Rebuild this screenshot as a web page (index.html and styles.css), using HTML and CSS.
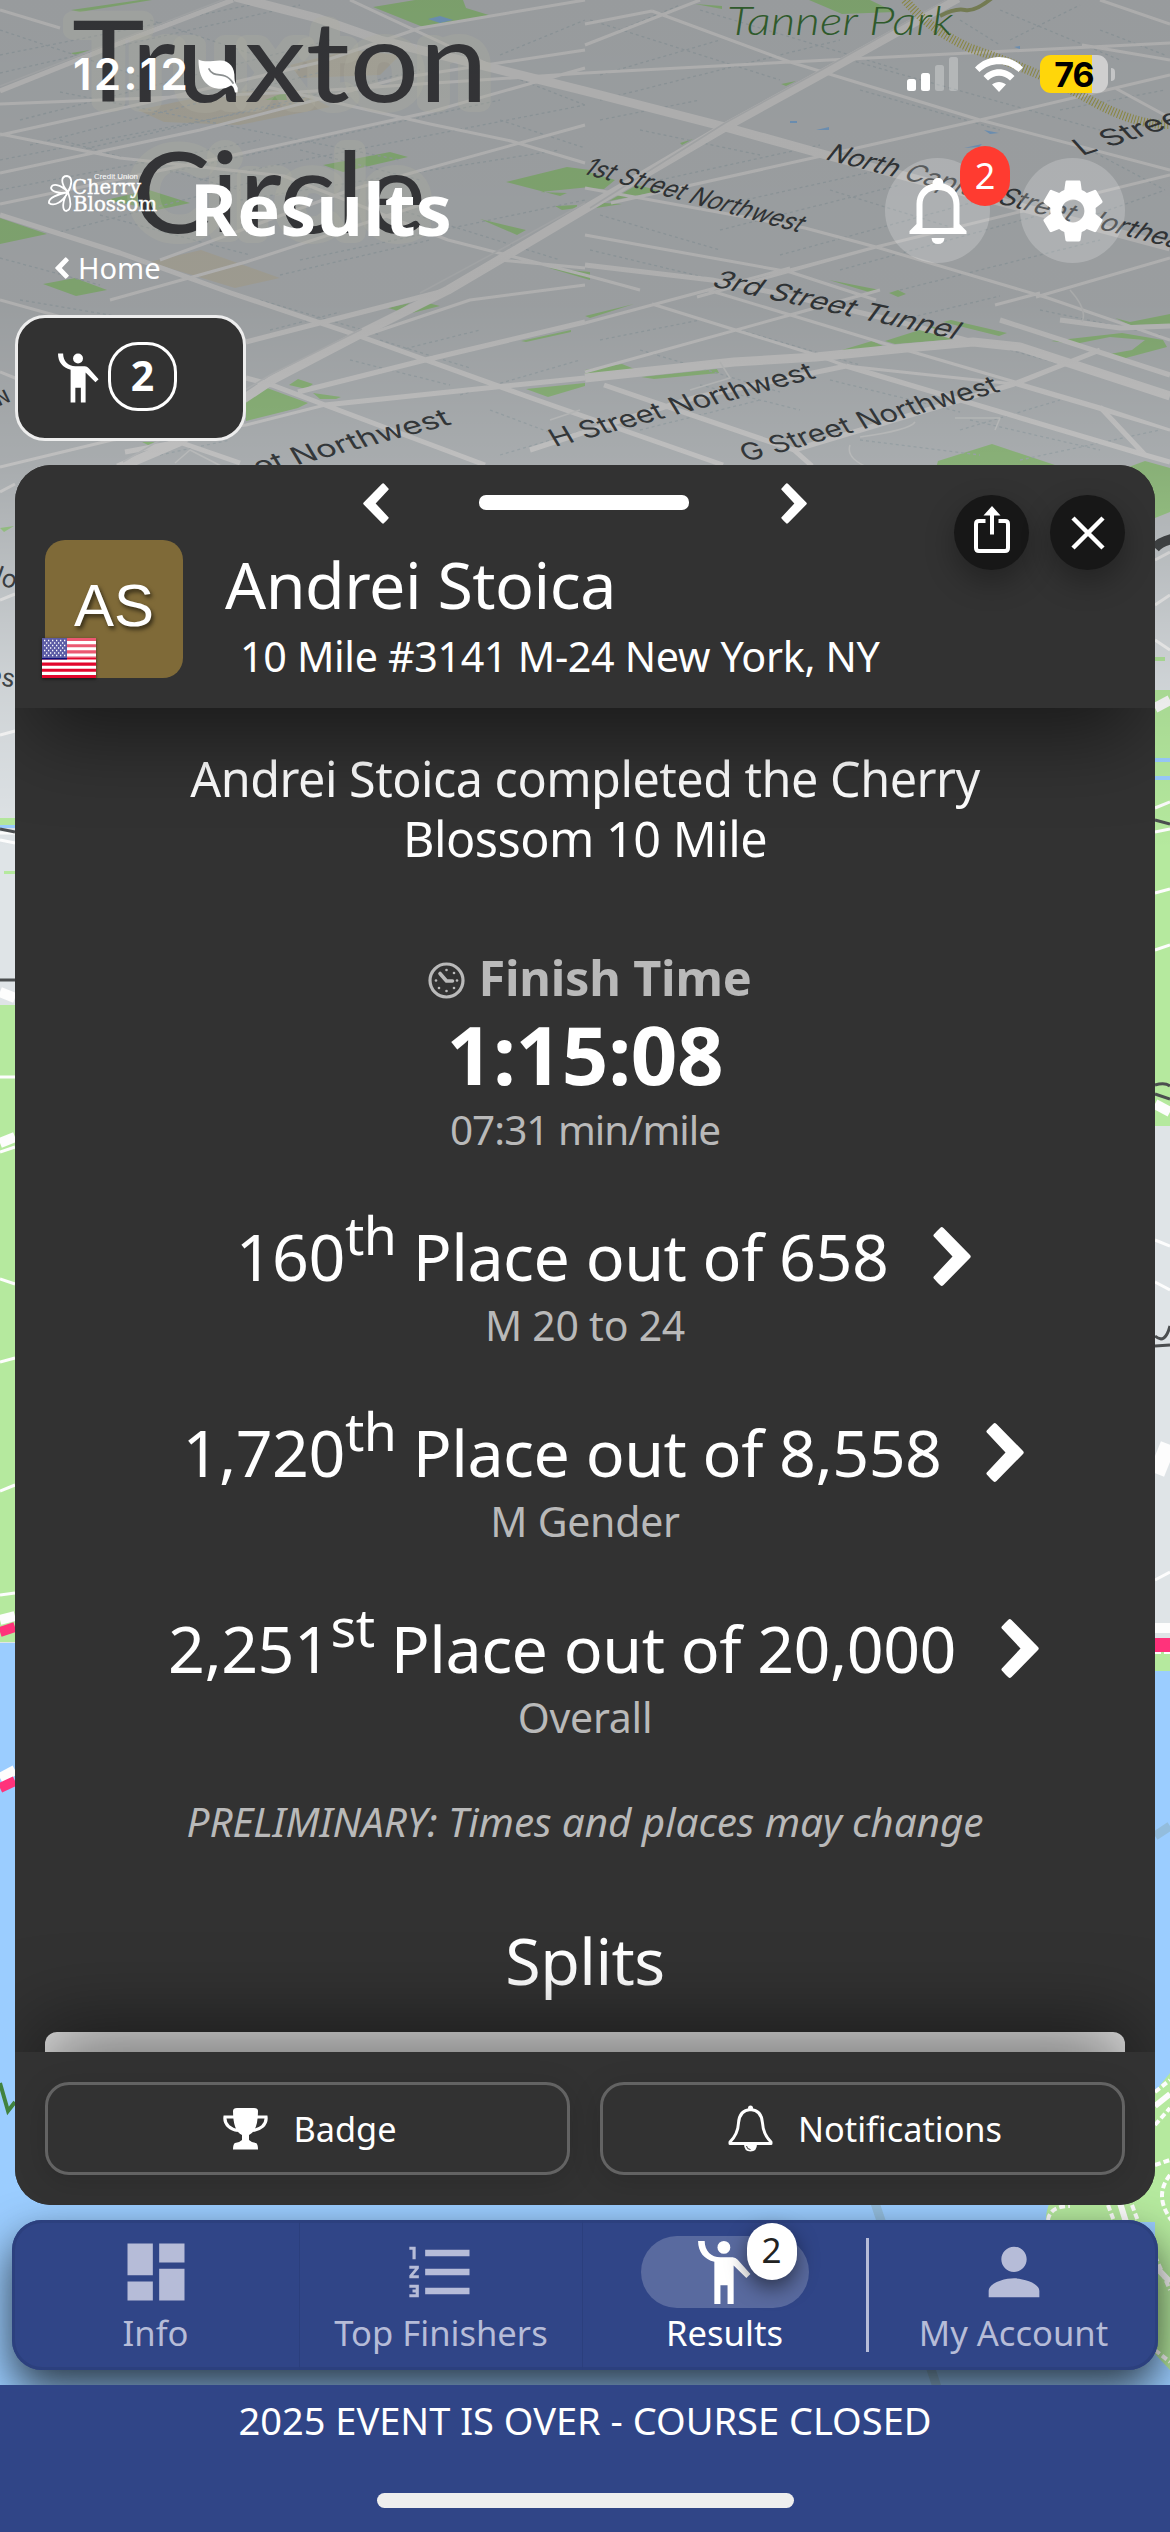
FILE: index.html
```html
<!DOCTYPE html>
<html lang="en">
<head>
<meta charset="utf-8">
<title>Results</title>
<link rel="stylesheet" href="styles.css">
</head>
<body>
<svg class="defs" width="0" height="0" aria-hidden="true">
  <symbol id="person" viewBox="0 0 52 62"><circle cx="25.4" cy="6.3" r="6.3"/><path d="M0 0H6.5C6.5 10 13 16 22 16H34Q37 16 39 18.5L51.5 32.5L47.5 36.5L35 24V62H29V43.5H22V62H16V20.5C6 18 0 11 0 0Z"/></symbol>
  <symbol id="chev" viewBox="0 0 38 59"><path d="M8.5 0Q9.500 0 10.500 1L37 28Q38.500 29.500 37 31L10.500 58Q9.500 59 8.500 59Q7.500 59 0.800 51.500Q0 50.500 0.800 49.500L19.500 29.500L0.800 9.500Q0 8.500 0.800 7.500Q7.500 0 8.500 0Z"/></symbol>
</svg>

<svg class="map" viewBox="0 0 1170 2532" aria-hidden="true">
  <defs>
    <linearGradient id="shade" x1="0" y1="0" x2="0" y2="850" gradientUnits="userSpaceOnUse">
      <stop offset="0" stop-color="#000" stop-opacity=".32"/><stop offset=".36" stop-color="#000" stop-opacity=".31"/>
      <stop offset=".55" stop-color="#000" stop-opacity=".245"/><stop offset=".8" stop-color="#000" stop-opacity=".08"/><stop offset="1" stop-color="#000" stop-opacity="0"/>
    </linearGradient>
  </defs>
  <rect width="1170" height="2532" fill="#dfe4e7"/>
  <g fill="#e3dfd0">
    <path d="M138 110L224 92L298 90L330 107L239 125L164 122ZM149 262L201 250L280 278L235 288ZM290 65L350 50L400 55L380 75L300 78Z"/>
  </g>
  <g fill="#b5e99e">
    <path d="M71 10L140 0H152L80 12ZM373 7L415 0H463L466 8L492 16L423 27ZM149 190L190 203L157 210L106 200ZM323 165L390 152L408 157L343 172ZM0 218L47 234L0 244ZM43 284L75 278L107 290L76 296ZM506 182L567 167L590 170V187L540 192L567 193L560 196ZM480 219L526 230L517 235ZM555 206L577 205V208L562 210ZM71 53L90 50L75 55ZM265 100L285 92L287 100Z"/>
    <path d="M549 268L590 272V280ZM695 4L722 6V9ZM809 0H870L895 12L842 14ZM585 171L615 180L604 189L585 188ZM609 201L637 185L661 191ZM596 208L604 203L622 204ZM781 84L796 81L786 86ZM680 143L693 139L682 145ZM829 280L880 290L872 293ZM889 293L898 290L906 294L898 297Z"/>
    <path d="M246 395L267 388L308 403L298 408L246 421ZM289 385L298 379L313 384L306 389ZM313 393L341 397L336 399H320ZM388 308L410 303L398 311ZM412 313L428 303L440 306ZM521 341L571 330V332L526 342ZM526 389L585 383V386L548 397ZM142 442H155L148 445Z"/>
    <path d="M585 370L622 364L637 370L585 375ZM585 316L634 304L590 318ZM641 377L717 369L719 373L654 379ZM842 350L872 341L883 346L854 350ZM885 341L932 326L958 339L895 344ZM943 322L951 320L1007 333L999 336ZM1051 341L1122 333L1163 340L1167 347L1122 359L1104 355L1132 350L1145 340L1110 337L1075 344ZM1115 318L1130 322L1170 314V324L1130 325ZM936 468L938 461L992 444L1055 465V468ZM1126 468L1145 461L1170 468V512L1150 520Z"/>
    <path d="M0 528L14 526L4 532ZM0 818H15V825H0ZM4 871H15V874H4ZM0 1005H15V1642H0ZM1155 657H1165V661H1155ZM1155 690H1170V1126H1155ZM1155 1652H1170V1671H1155Z"/>
  </g>
  <g fill="#9bcdff">
    <path d="M0 1643H15V2390H0ZM14 2160H1060V2225H14ZM0 2225H1170V2390H0ZM1155 1671H1170V2230H1140ZM0 825H15V828H0ZM1155 758H1170V762H1155ZM1155 776H1170V780H1155ZM428 19L440 16L453 20L440 23ZM816 130L829 127V130ZM984 130L999 133L990 134ZM964 148L982 144L979 147ZM790 121H797V123H790ZM1014 47L1020 46V49Z"/>
  </g>
  <path fill="#b5e99e" d="M1046 2222Q1045 2203 1060 2190L1140 2110L1170 2073V2370L1155 2354V2222Z"/>
  <g fill="none" stroke="#c9d5da" stroke-width="1.300" stroke-dasharray="3 3">
    <path d="M0 30L150 80M0 55L260 3M0 73L300 5M20 120L330 40M30 145L330 70M80 150L420 70M0 160L360 90M170 172L500 100M200 180L585 105M0 190L260 140M240 200L560 150M300 260L585 200M280 275L430 240M0 258L100 285M60 232L260 180M470 60L585 105M500 55L585 20M150 20L300 70M60 92L400 160M60 140L240 190M400 210L560 260M100 215L250 255M300 150L420 180M500 120L585 148"/>
    <path d="M590 20L780 80M600 75L720 40M600 100L840 40M700 10L900 70M850 60L1100 130M860 90L1000 130M600 120L700 100M640 130L760 155M660 180L820 145M700 210L880 170M720 230L900 185M780 255L1000 195M840 270L1040 215M900 290L1100 240M600 215L720 250M590 250L800 300M830 190L960 230M1000 10L1120 60M1010 40L1080 5M1100 30L1165 55M1060 110L1165 90M1080 220L1165 190M1090 150L1165 190M960 20L1000 45M620 30L680 5"/>
    <path d="M260 300L380 335M270 330L340 312M380 340L470 368M400 350L480 330M350 360L450 385M460 395L580 360M490 410L570 440M500 455L585 430M20 300L140 320M600 340L700 320M640 350L780 392M740 330L860 365M700 385L800 410M830 380L960 412M960 430L1060 400M970 420L1100 450M1020 460L1160 430M1010 350L1100 375M900 320L1000 296M640 430L760 400M860 440L980 455M1040 310L1160 335M160 455L230 440"/>
  </g>
  <g fill="none" stroke="#fdfdfd" stroke-linejoin="round">
    <path stroke-width="9" d="M235 -3L317 18L380 40L585 91L725 127L826 155L1170 247M118 468L179 442L272 380L362 333L448 290L504 257L585 209L725 127L816 77L958 -2M585 378L660 370L734 362L816 357L906 348L973 342L1020 347L1170 396"/>
    <path stroke-width="5" d="M0 91L115 45L233 0M0 215L120 253L231 293L362 337L537 400L723 465M246 342L448 290M246 378L272 385L325 405L485 465M325 405L496 387L585 378M298 392L425 360L585 322M585 265L712 280L790 296L900 322L973 342M1000 320L1170 375M1060 320L1120 328L1170 326M1100 407L1145 455L1170 462M846 366L1145 455M530 450L622 420L697 397L846 366M794 450L1014 384L1100 350M604 385L794 450L812 466M125 452L179 442L240 463"/>
    <path stroke-width="3" d="M0 10L60 28M350 0L511 75L585 91M0 104L300 92L585 73L790 62L1170 43M0 135L145 103L321 62L420 28L585 0M0 134L120 158L284 176L448 240L585 275L640 290M0 173L200 130L400 78L585 50M0 204L220 158L430 112L585 68M267 87L430 124L511 141L585 163M160 260L350 190L585 125M652 11L790 62L980 120L1170 170M652 11L585 24M611 203L826 155L980 120L1115 88L1170 75M697 297L876 247L1170 175M790 270L876 247M585 188L805 228L876 247L1048 298L1170 340M585 235L790 272L876 300M1036 297L1170 258M585 323L652 305L708 290L790 268M652 304L816 355L846 366L1014 384L1170 430M708 290L906 350L1100 407L1170 430M585 372L790 315L880 290M995 305L1040 293M0 467L112 440L246 425L325 405M0 300L90 325M0 372L20 380M700 0L585 45M1100 0L1170 24M1082 45L1170 60M1115 88L1170 118M500 260L585 268M110 300L246 262L420 205M360 337L470 300L585 285"/>
    <path stroke="#e9ecee" stroke-width="1.500" d="M420 293L496 252L585 203M123 462L272 374L362 329M590 208L725 123L816 73L950 -2M0 86L233 -4"/>
    <path stroke-width="1.500" stroke="#f4f6f6" d="M850 445Q845 460 875 470M860 437Q910 430 915 422M955 418H1000L995 430M550 420L580 410M1070 290Q1088 310 1082 322M720 362L730 378L690 390M175 463L190 450L225 468"/>
  </g>
  <g fill="none" stroke="#c8c35b" stroke-width="1.200" stroke-dasharray="1 2"><path stroke-width="9" d="M905 0Q930 30 970 48Q1040 72 1090 100T1175 124"/></g>
  <path fill="none" stroke="#a9b478" stroke-width="4" d="M940 16Q955 8 965 10T992 -2"/>
  <g class="road-label" fill="#44494c">
    <text transform="translate(581 173) rotate(15.300) skewX(-24)" textLength="225" lengthAdjust="spacingAndGlyphs">1st Street Northwest</text>
    <text transform="translate(824 159) rotate(14.300) skewX(-24)" textLength="388" lengthAdjust="spacingAndGlyphs">North Capitol Street Northeast</text>
    <text transform="translate(1082 156) rotate(-18) skewX(24)" textLength="120" lengthAdjust="spacingAndGlyphs">L Street</text>
    <text transform="translate(710 286) rotate(12.300) skewX(-24)" textLength="250" lengthAdjust="spacingAndGlyphs">3rd Street Tunnel</text>
    <text transform="translate(555 447) rotate(-14.800) skewX(16)" textLength="271" lengthAdjust="spacingAndGlyphs">H Street Northwest</text>
    <text transform="translate(746 462) rotate(-15.500) skewX(16)" textLength="265" lengthAdjust="spacingAndGlyphs">G Street Northwest</text>
    <text transform="translate(180 496) rotate(-14.800) skewX(16)" textLength="282" lengthAdjust="spacingAndGlyphs">I Street Northwest</text>
    <text transform="translate(-18 413) rotate(-22) skewX(20)">nw</text>
    <text transform="translate(-18 578) rotate(20)">No</text>
    <text transform="translate(-14 682) rotate(12)">es</text>
  </g>
  <g class="place" fill="#4a4b4f">
    <text x="72" y="102" textLength="416" lengthAdjust="spacingAndGlyphs">Truxton</text>
    <text x="132" y="233" textLength="294" lengthAdjust="spacingAndGlyphs">Circle</text>
  </g>
  <text class="park" x="727" y="35" textLength="226" lengthAdjust="spacingAndGlyphs">Tanner Park</text>
  <g fill="none" stroke="#fdfdfd">
    <path stroke-width="3" d="M0 492L15 484M0 600L15 594M0 735L15 731M0 833H15M0 840L15 843M0 1077H15M0 1152L15 1147M0 1279L15 1284M0 1362L15 1358M0 1491L15 1485M0 1595L15 1593M1155 560L1170 552M1155 605L1170 595M1155 640L1170 650M1155 808L1170 802M1155 832L1170 829M1155 893L1170 889M1155 950L1170 945M1155 1240L1170 1246M1155 1282L1170 1290M1155 1580L1170 1572"/>
    <path stroke-width="10" d="M0 992L15 998M0 1143L15 1137M1155 708L1170 700M1155 1104L1170 1112M1155 1628H1170M0 1620L15 1616M0 1778L15 1770"/>
    <path stroke-width="32" d="M1155 1456L1170 1462"/>
    <path stroke-width="4" stroke-dasharray="6 3" d="M1155 2092L1170 2080M1155 2125L1170 2108M1155 2165L1170 2160M1170 2175Q1150 2200 1180 2230M1108 2205L1114 2221M1132 2205L1138 2221M1048 2220Q1050 2206 1070 2206M1155 2256L1170 2290M1155 2350L1170 2362M1155 1652H1170"/>
    <path stroke-width="6" d="M1120 2203L1126 2222M1155 2106L1170 2094M1155 2266L1170 2282"/>
  </g>
  <g fill="none" stroke="#4b4e50" stroke-width="3"><path d="M0 829L15 832M0 980H15M1155 820L1170 824M1155 1085Q1165 1082 1170 1086M1155 1094L1170 1099M1155 1336Q1165 1345 1170 1326M1155 1346L1170 1345"/><path stroke-width="10" d="M1155 548Q1160 542 1172 539"/></g>
  <g fill="none" stroke="#ff337b" stroke-width="10"><path d="M0 1632L15 1627M0 1788L15 1781"/><path stroke-width="14" d="M1155 1645H1170"/></g>
  <path fill="none" stroke="#41823f" stroke-width="4" d="M0 2083L8 2111L15 2102"/>
  <path fill="none" stroke="#93bddd" stroke-width="9" d="M872 2194L938 2390M1155 1836L1170 1826"/>
  <rect width="1170" height="860" fill="url(#shade)"/>
</svg>

<div class="app">
  <div class="status">
    <div class="status-left"><span class="clock">12:12</span>
      <svg width="40" height="34" viewBox="0 0 40 34"><path fill="#fff" d="M.5.5C8 4 14 1.500 22 1.500C32 1.500 37 9 36.500 19C36.500 23 38 25 39.800 29L39.500 33.500L37 33.500C36 29 35 27 33 26.500C29 29 24 30.500 19 29.500C5 27 .5 15 .5.500Z"/><path fill="none" stroke="#8b8f90" stroke-width="1.800" stroke-linecap="round" d="M11 10C14 17 22 15 27 17Q32 19 35 24"/></svg>
    </div>
    <div class="status-right">
      <svg width="51" height="34" viewBox="0 0 51 34" fill="#fff"><rect y="22" width="9" height="12" rx="2.500"/><rect x="14" y="16" width="9" height="18" rx="2.500"/><g opacity=".27"><rect x="28" y="8" width="9" height="26" rx="2.500"/><rect x="42" y="0" width="9" height="34" rx="2.500"/></g></svg>
      <svg class="wifi" width="48" height="35" viewBox="0 0 48 35" fill="#fff"><path d="M0 10.500C13-3.500 35-3.500 48 10.500L43.500 15C33 4.500 15 4.500 4.500 15ZM8.500 19C17 10 31 10 39.500 19L35 23.500C29 17 19 17 13 23.500ZM17 27.500C21 24 27 24 31 27.500L24 35Z"/></svg>
      <div class="battery"><span>76</span></div><i class="nub"></i>
    </div>
  </div>

  <header class="top">
    <div class="top-row">
      <svg class="logo" width="110" height="42" viewBox="0 0 110 42" fill="#fff">
        <g fill="none" stroke="#fff" stroke-width="1.800"><path d="M20 21C12 12 13 5 19 5C25 6 24 14 20 21C12 13 4 12 3 17C4 21 12 23 20 21C10 23 0 27 1 32C6 36 15 31 20 21C14 30 14 39 18 40C24 39 23 30 20 21"/></g>
        <text class="logo-small" x="46" y="7.500" textLength="44" lengthAdjust="spacingAndGlyphs">Credit Union</text>
        <text class="logo-big" x="24" y="22.500" textLength="69" lengthAdjust="spacingAndGlyphs">Cherry</text>
        <text class="logo-big" x="25" y="39.500" textLength="84" lengthAdjust="spacingAndGlyphs">Blossom</text>
      </svg>
      <h1>Results</h1>
      <div class="round"><svg width="58" height="66" viewBox="0 0 58 66"><path fill="#fff" fill-rule="evenodd" d="M29 0C32 0 34.500 2 34.500 5.500C44 8 50.500 15.500 50.500 26V46L57.500 53V56H.5V53L7.500 46V26C7.500 15.500 14 8 23.500 5.500C23.500 2 26 0 29 0ZM29 12C19 12 13.500 18 13.500 27V50H44.500V27C44.500 18 39 12 29 12Z"/><path fill="#fff" d="M22.500 60H35.500Q35 66 29 66T22.500 60Z"/></svg><b class="alert">2</b></div>
      <div class="round"><svg width="76" height="76" viewBox="0 0 24 24"><path fill="#fff" d="M19.140 12.940c.04-.3.060-.61.060-.94 0-.32-.02-.64-.07-.94l2.030-1.580c.18-.14.230-.41.120-.61l-1.920-3.320c-.12-.22-.37-.29-.59-.22l-2.390.96c-.5-.38-1.030-.7-1.620-.94L14.400 2.810c-.04-.24-.24-.41-.48-.41h-3.840c-.24 0-.43.170-.47.410L9.250 5.350C8.660 5.590 8.120 5.920 7.630 6.290L5.240 5.330c-.22-.08-.47 0-.59.220L2.740 8.870C2.620 9.080 2.660 9.340 2.860 9.480l2.030 1.580C4.840 11.360 4.800 11.690 4.800 12s.02.640.07.940l-2.030 1.580c-.18.140-.23.410-.12.610l1.920 3.320c.12.220.37.290.59.220l2.390-.96c.5.380 1.030.7 1.620.94l.36 2.540c.05.240.24.410.48.410h3.840c.24 0 .44-.17.470-.41l.36-2.540c.59-.24 1.130-.56 1.620-.94l2.390.96c.22.080.47 0 .59-.22l1.920-3.320c.12-.22.070-.47-.12-.61L19.140 12.940zM12 15.600c-1.980 0-3.600-1.620-3.600-3.600s1.620-3.600 3.600-3.600 3.600 1.620 3.600 3.600-1.620 3.600-3.600 3.600z"/></svg></div>
    </div>
    <div class="home"><svg width="14" height="22"><use href="#chev" transform="rotate(180 7 11)"/></svg>Home</div>
  </header>

  <div class="chip"><svg width="41" height="50"><use href="#person"/></svg><b>2</b></div>

  <main class="panel">
    <div class="panel-head">
      <div class="handle">
        <div class="pager"><svg width="26" height="41"><use href="#chev" transform="rotate(180 13 20.500)"/></svg><i></i><svg width="26" height="41"><use href="#chev"/></svg></div>
        <div class="actions">
          <span><svg width="36" height="48" viewBox="0 0 36 48"><path fill="none" stroke="#fff" stroke-width="4" d="M11.500 15H5Q2 15 2 18V42Q2 45 5 45H31Q34 45 34 42V18Q34 15 31 15H24.500"/><path fill="#fff" d="M18 0L26.500 9.500H20V28.500H16V9.500H9.500Z"/></svg></span>
          <span><svg width="34" height="34" viewBox="0 0 34 34"><path fill="none" stroke="#fff" stroke-width="4.500" d="M2 2L32 32M32 2L2 32"/></svg></span>
        </div>
      </div>
      <div class="who">
        <div class="avatar">AS
          <svg class="flag" width="54" height="40" viewBox="0 0 54 40"><rect width="54" height="40" fill="#fff"/><path stroke="#e2062c" stroke-width="3.080" d="M0 1.540H54M0 7.700H54M0 13.860H54M0 20H54M0 26.160H54M0 32.310H54M0 38.460H54"/><rect width="25" height="21.500" fill="#0b0b78"/><path stroke="#fff" stroke-width="1.300" stroke-dasharray="1.300 2.700" d="M2 2.500H24M4 5H23M2 7.500H24M4 10H23M2 12.500H24M4 15H23M2 17.500H24"/><rect width="54" height="20" fill="#fff" opacity=".33"/></svg>
        </div>
        <div><div class="name">Andrei Stoica</div><div class="meta">10 Mile #3141 M-24 New York, NY</div></div>
      </div>
    </div>

    <div class="content">
      <p class="done">Andrei Stoica completed the Cherry<br>Blossom 10 Mile</p>
      <div class="finish"><svg width="37" height="37" viewBox="0 0 37 37"><g fill="none" stroke="#b9b9b9"><circle cx="18.500" cy="18.500" r="16.500" stroke-width="3.200"/><path stroke-width="3.600" stroke-linecap="round" stroke-linejoin="round" d="M12 11.500L18.500 19H24.500"/></g><g fill="#b9b9b9"><circle cx="18.500" cy="8" r="1.300"/><circle cx="18.500" cy="29" r="1.300"/><circle cx="8" cy="18.500" r="1.300"/><circle cx="29" cy="18.500" r="1.300"/><circle cx="11" cy="26" r="1.300"/><circle cx="26" cy="26" r="1.300"/><circle cx="26" cy="11" r="1.300"/></g></svg>Finish Time</div>
      <div class="time">1:15:08</div>
      <div class="pace">07:31 min/mile</div>
      <div class="place-row">160<sup>th</sup> Place out of 658<svg width="38" height="59"><use href="#chev"/></svg></div>
      <div class="sub">M 20 to 24</div>
      <div class="place-row next">1,720<sup>th</sup> Place out of 8,558<svg width="38" height="59"><use href="#chev"/></svg></div>
      <div class="sub">M Gender</div>
      <div class="place-row next">2,251<sup>st</sup> Place out of 20,000<svg width="38" height="59"><use href="#chev"/></svg></div>
      <div class="sub">Overall</div>
      <div class="prelim">PRELIMINARY: Times and places may change</div>
      <h2>Splits</h2>
      <div class="splits"></div>
    </div>

    <div class="panel-foot">
      <div class="btn"><svg width="45" height="42" viewBox="0 0 45 42"><path fill="#fff" d="M10 3Q10 0 14 0H31Q35 0 35 3Q35 23 26 27V32Q29 35 33 35Q35 36 35 41.500H10Q10 36 12 35Q16 35 19 32V27Q10 23 10 3Z"/><path fill="none" stroke="#fff" stroke-width="3.200" d="M12 9H2C1 17 8 21.500 15 22.500M33 9H43C44 17 37 21.500 30 22.500"/></svg>Badge</div>
      <div class="btn"><svg width="45" height="47" viewBox="0 0 45 47"><path fill="none" stroke="#fff" stroke-width="3" stroke-linejoin="round" d="M22.500 4.500C14 5 11 11 10.500 18C10 28 6 33 2 37V38.500H43V37C39 33 35 28 34.500 18C34 11 31 5 22.500 4.500Z"/><circle cx="22.500" cy="3" r="2.500" fill="#fff"/><path fill="#fff" d="M16 39H29Q29 46.500 22.500 46.500T16 39Z"/><path fill="none" stroke="#333" stroke-width="1" d="M18.500 41Q19 44.500 22.500 44.500"/></svg>Notifications</div>
    </div>
  </main>

  <nav class="tabs">
    <div class="tab w1"><div class="ico"><svg width="76" height="76" viewBox="0 0 24 24"><path d="M3 13h8V3H3v10zm0 8h8v-6H3v6zm10 0h8V11h-8v10zm0-18v6h8V3h-8z"/></svg></div>Info</div>
    <div class="tab w2"><div class="ico"><svg width="76" height="76" viewBox="0 0 24 24"><path d="M2 17h2v.5H3v1h1v.5H2v1h3v-4H2v1zm1-9h1V4H2v1h1v3zm-1 3h1.800L2 13.100v.9h3v-1H3.200L5 10.900V10H2v1zm5-6v2h14V5H7zm0 14h14v-2H7v2zm0-6h14v-2H7v2z"/></svg></div>Top Finishers</div>
    <div class="tab w3 on"><div class="ico pill"><svg width="53" height="63"><use href="#person"/></svg><b class="count">2</b></div>Results</div>
    <i class="rule"></i>
    <div class="tab w4"><div class="ico"><svg width="76" height="76" viewBox="0 0 24 24"><path d="M12 12c2.210 0 4-1.790 4-4s-1.790-4-4-4-4 1.790-4 4 1.790 4 4 4zm0 2c-2.670 0-8 1.340-8 4v2h16v-2c0-2.660-5.330-4-8-4z"/></svg></div>My Account</div>
  </nav>

  <footer class="banner">2025 EVENT IS OVER - COURSE CLOSED<i></i></footer>
</div>
</body>
</html>
```
FILE: styles.css
```css
* { box-sizing: border-box; }
html, body { margin: 0; }
body {
  position: relative;
  width: 1170px;
  height: 2532px;
  overflow: hidden;
  font-family: "Noto Sans", sans-serif;
  color: #fff;
}
svg { display: block; flex: none; }
.defs { position: absolute; }
.map { position: absolute; top: 0; left: 0; width: 1170px; height: 2532px; }
.road-label text { font: 25px Inter, "Noto Sans", sans-serif; }
.place text {
  font: 113px Lato, sans-serif;
  stroke: rgba(255, 255, 235, .3);
  stroke-width: 20px;
  stroke-linejoin: round;
  paint-order: stroke;
}
.park { font: italic 300 39px Lato, sans-serif; fill: #45843f; }

.app { position: relative; display: flex; flex-direction: column; height: 2532px; }
.app > * { flex-shrink: 0; }
.app use { fill: #fff; }

.status { height: 148px; display: flex; justify-content: space-between; align-items: center; padding: 0 55px 0 73px; }
.status-left, .status-right { display: flex; align-items: center; }
.clock { font: 600 44px/44px Inter, sans-serif; letter-spacing: 2.200px; width: 125px; white-space: nowrap; }
.status-left svg { margin-top: 3px; }
.wifi { margin: 0 17px; }
.battery {
  width: 68px; height: 38px; border-radius: 11px;
  background: linear-gradient(90deg, #ffd60a 52.500px, #cfcfcf 52.500px);
  color: #000; font: 700 34px/39px Inter, sans-serif; text-align: center; letter-spacing: -1px;
}
.nub { width: 4px; height: 13px; margin-left: 3px; border-radius: 0 4px 4px 0; background: #c4c5c6; }

.top { height: 167px; padding: 10px 45px 0 48px; }
.top-row { height: 105px; display: flex; align-items: center; }
.logo { margin-top: -38px; }
.logo-small { font: 8px "Liberation Sans", sans-serif; }
.logo-big { font: 400 20px "DejaVu Serif", serif; stroke: #fff; stroke-width: .4px; }
h1 { flex: 1; margin: 0 0 5px 32px; font-size: 72px; line-height: 90px; font-weight: 700; }
.round {
  position: relative; width: 105px; height: 105px; border-radius: 50%; margin-left: 30px;
  background: rgba(255, 255, 255, .2); display: flex; align-items: center; justify-content: center;
}
.alert {
  position: absolute; left: 75px; top: -12px; width: 50px; height: 60px; border-radius: 25px;
  background: #ff3b30; font-weight: 400; font-size: 36px; line-height: 60px; text-align: center;
}
.home { display: flex; align-items: center; gap: 9px; height: 36px; margin: -13px 0 0 7px; font-size: 29px; line-height: 36px; }

.chip {
  width: 231px; height: 126px; margin-left: 15px; padding-left: 40px; gap: 9px;
  display: flex; align-items: center; background: #323232;
  border: 3px solid #ededed; border-radius: 30px;
}
.chip b { width: 69px; height: 69px; border: 3px solid #fff; border-radius: 30px; font-size: 41px; line-height: 61px; text-align: center; margin-bottom: 3px; }

.panel { height: 1740px; margin: 24px 15px 0; border-radius: 36px; background: #323232; overflow: hidden; display: flex; flex-direction: column; }
.panel-head {
  position: relative; z-index: 1; height: 243px; padding: 0 30px; background: #323232;
  box-shadow: 0 45px 80px -20px rgba(0, 0, 0, .5);
}
.handle { height: 75px; display: grid; grid-template-columns: 1fr auto 1fr; }
.pager { grid-column: 2; display: flex; gap: 90px; margin-top: 18px; height: 41px; align-items: center; }
.pager i { width: 210px; height: 15px; border-radius: 7px; background: #fff; margin: -2px 2px 0 0; }
.actions { display: flex; justify-content: flex-end; gap: 21px; margin-top: 30px; }
.actions span {
  width: 75px; height: 75px; border-radius: 50%; background: #171717;
  display: flex; align-items: center; justify-content: center; box-shadow: 0 12px 30px rgba(0, 0, 0, .3);
}
.actions span:first-child svg { margin-top: -6px; }
.who { display: flex; gap: 42px; }
.avatar {
  position: relative; width: 138px; height: 138px; border-radius: 20px; background: #7f6a38; text-align: center;
  font: 60px/132px "Liberation Sans", sans-serif; text-shadow: 2px 3px 4px rgba(0, 0, 0, .6);
}
.flag { position: absolute; left: -3px; bottom: 0; box-shadow: 0 1px 3px rgba(0, 0, 0, .6); }
.name { margin-top: 7px; font-size: 64.500px; line-height: 75px; letter-spacing: -.5px; }
.meta { margin-left: 15px; font-size: 41.300px; line-height: 68px; letter-spacing: -.35px; white-space: nowrap; }

.content { height: 1344px; overflow: hidden; padding: 40px 30px 0; text-align: center; }
.done { margin: 0; font-size: 48.500px; line-height: 60px; letter-spacing: -.5px; }
.finish { margin-top: 76px; display: flex; justify-content: center; align-items: center; gap: 13px; padding-left: 10px; font-size: 48.700px; line-height: 66px; letter-spacing: -.2px; font-weight: 700; color: #b9b9b9; }
.finish svg { margin-top: 6px; }
.time { font-size: 81.500px; line-height: 88px; letter-spacing: -.3px; font-weight: 700; }
.pace { font-size: 40.500px; line-height: 64px; height: 62px; letter-spacing: -1px; color: #b9b9b9; }
.place-row { height: 84px; margin-top: 54px; display: flex; justify-content: center; align-items: center; white-space: pre; font-size: 64.500px; line-height: 84px; letter-spacing: -.5px; }
.place-row.next { margin-top: 58px; }
.place-row sup { font-size: 53.700px; line-height: 84px; vertical-align: baseline; position: relative; top: -21px; }
.place-row svg { margin: 0 -37px 0 45px; }
.sub { font-size: 41px; line-height: 54px; letter-spacing: -.25px; color: #b9b9b9; }
.prelim { margin-top: 48px; font-size: 40.500px; line-height: 60px; letter-spacing: -.1px; font-style: italic; color: #b9b9b9; }
h2 { margin: 66px 0 0; font-size: 64.500px; line-height: 84px; letter-spacing: -.5px; font-weight: 400; }
.splits { margin-top: 30px; height: 60px; border-radius: 12px; background: #eee; }

.panel-foot {
  position: relative; z-index: 1; height: 153px; padding: 30px; display: flex; gap: 30px; background: #323232;
  box-shadow: 0 -45px 80px -20px rgba(0, 0, 0, .5);
}
.btn {
  flex: 1; height: 93px; padding-left: 5px; border: 3px solid #636363; border-radius: 24px; box-shadow: 0 6px 30px rgba(0, 0, 0, .15);
  display: flex; align-items: center; justify-content: center; gap: 25px; font-size: 34.300px;
}

.tabs {
  position: relative; height: 150px; margin: 15px 12px 0; border-radius: 30px; background: #304587;
  display: flex; box-shadow: 0 20px 45px rgba(0, 0, 0, .72), inset 0 0 0 3px #2c407e;
}
.tab { display: flex; flex-direction: column; align-items: center; padding-top: 16px; color: #b6bcd8; font-size: 34.600px; line-height: 49px; border-right: 1px solid #2b3f7d; }
.tab > .ico { fill: #b6bcd8; }
.ico { position: relative; height: 72px; display: flex; align-items: center; justify-content: center; }
.w1 { width: 288px; }
.w2 { width: 283px; }
.w3 { width: 283px; border-right: 0; }
.w4 { flex: 1; border-right: 0; }
.on { color: #fff; }
.pill { width: 168px; border-radius: 36px; background: rgba(255, 255, 255, .2); }
.count {
  position: absolute; left: 106px; top: -13px; width: 50px; height: 57px; border-radius: 25px; background: #fff;
  color: #222; font-weight: 400; font-size: 35px; line-height: 54px; text-align: center; box-shadow: 0 8px 20px rgba(0, 0, 0, .5);
}
.rule { width: 3px; height: 114px; margin-top: 18px; background: #b6bcd8; }

.banner { position: relative; height: 147px; margin-top: 15px; background: #304587; display: flex; flex-direction: column; align-items: center; font-size: 38px; line-height: 70px; }
.banner i { width: 417px; height: 15px; border-radius: 8px; background: #eee; margin-top: 38px; }
```
